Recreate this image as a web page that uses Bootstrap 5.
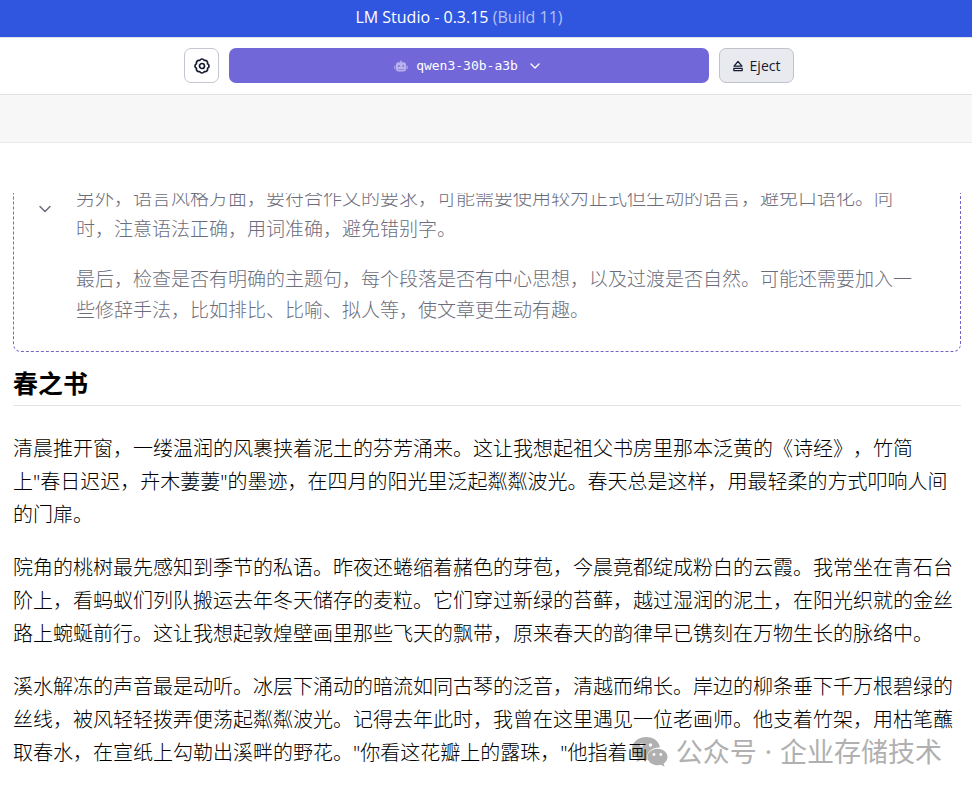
<!DOCTYPE html>
<html lang="zh-CN">
<head>
<meta charset="utf-8">
<meta name="viewport" content="width=device-width, initial-scale=1">
<title>LM Studio</title>
<link href="https://cdn.jsdelivr.net/npm/bootstrap@5.3.0/dist/css/bootstrap.min.css" rel="stylesheet">
<style>
body { font-family: "Noto Sans", "Noto Sans CJK SC", sans-serif; color: #000; background: #fff; text-spacing-trim: space-all; }
.title-bar { background: #3056e0; color: #fff; font-family: "Open Sans", sans-serif; font-size: 16px; line-height: 20px; padding: 7px 54px 10px 0; }
.title-bar span { color: #b3c1f4; font-weight: 500; }
.tool-bar { border-top: 1px solid #dee2ea; border-bottom: 1px solid #e2e2e4; padding: 10px 178px 11px 184px; gap: 10px; }
.tool-bar .btn { height: 35px; border-radius: 7px; padding: 0; }
.btn.gear-btn { width: 35px; background: #fff; border: 1px solid #c4c5d0; color: #141b2e; }
.btn.model-btn { background: #7267d8; color: #fff; border: 0; font-family: "DejaVu Sans Mono", monospace; font-size: 13px; }
.btn.eject-btn { width: 75px; background: #e9eaef; border: 1px solid #c1c3cc; color: #141b2e; font-family: "Open Sans", sans-serif; font-size: 14px; gap: 7px; }
.sub-bar { height: 48px; background: #f7f7f7; border-bottom: 1px solid #e9e9e9; }
.chat-pane { margin-top: 50px; padding: 0 11px 21px 13px; min-height: 0; }
.thought-box { border: 1px dashed #7267c8; border-radius: 8px; padding: 24px 39px 25px 24px; color: #6b6d7c; font-weight: 300; font-size: 19px; line-height: 31px; gap: 24px; }
.thought-box p { margin-bottom: 19px; }
.thought-box .fold-btn { color: #6b6d7c; width: 14px; padding-top: 19px; }
.chat-pane h1 { font-size: 25px; line-height: 36px; font-weight: 700; padding: 13px 0 4px; border-bottom: 1px solid #e3e3e5; margin-bottom: 26px; }
.story-text p { font-size: 20px; line-height: 33px; font-weight: 300; margin-bottom: 20px; }
.watermark { right: 30px; bottom: 18px; z-index: -1; color: #b0b0b0; font-size: 27px; line-height: 40px; gap: 8px; }
svg { display: block; flex: none; }
</style>
<script src="https://cdn.jsdelivr.net/npm/bootstrap@5.3.0/dist/js/bootstrap.bundle.min.js"></script>
</head>
<body>
<div class="d-flex flex-column vh-100 overflow-hidden position-relative">
  <header class="title-bar text-center">LM Studio - 0.3.15 <span>(Build 11)</span></header>
  <nav class="tool-bar d-flex">
    <button type="button" class="btn gear-btn d-flex align-items-center justify-content-center" aria-label="Settings">
      <svg width="18" height="18" viewBox="0 0 18 18" fill="none" stroke="currentColor" stroke-width="1.700" stroke-linejoin="round"><path d="M6.700 3.500A2.500 2.500 0 0 1 11.300 3.500A2.500 2.500 0 0 1 14.500 6.700A2.500 2.500 0 0 1 14.500 11.300A2.500 2.500 0 0 1 11.300 14.500A2.500 2.500 0 0 1 6.700 14.500A2.500 2.500 0 0 1 3.500 11.300A2.500 2.500 0 0 1 3.500 6.700A2.500 2.500 0 0 1 6.700 3.500z"/><circle cx="9" cy="9" r="2.500"/></svg>
    </button>
    <button type="button" class="btn model-btn flex-grow-1 d-flex align-items-center justify-content-center">
      <svg class="me-2" width="14" height="12" viewBox="0 0 14 12" fill="#b9b2ec"><path d="M6.300.5h1.400v1.800h1.800a2.500 2.500 0 0 1 2.500 2.500v4.400a2.300 2.300 0 0 1-2.300 2.300H4.300A2.300 2.300 0 0 1 2 9.200V4.800a2.500 2.500 0 0 1 2.500-2.500h1.800zM1.400 5.200v4.200A1.400 1.400 0 0 1 .3 8V6.500a1.400 1.400 0 0 1 1.100-1.300zM12.600 5.200a1.400 1.400 0 0 1 1.100 1.300V8a1.400 1.400 0 0 1-1.100 1.400z"/><g fill="#7f75db"><circle cx="4.900" cy="6" r="1"/><circle cx="9.100" cy="6" r="1"/><path d="M4 9h1.400v1H4zM6.300 9h1.400v1H6.300zM8.600 9H10v1H8.600z"/></g></svg>
      <span>qwen3-30b-a3b</span>
      <svg class="ms-2" width="18" height="10" viewBox="0 0 18 10" fill="none" stroke="currentColor" stroke-width="1.300" stroke-linecap="round" stroke-linejoin="round"><path d="m5 3 4 4 4-4"/></svg>
    </button>
    <button type="button" class="btn eject-btn d-flex align-items-center justify-content-center">
      <svg width="10" height="12" viewBox="0 0 10 12" fill="none" stroke="currentColor" stroke-width="1.200" stroke-linejoin="round"><path d="M5 1.500 9 6.200H1zM.8 8.400h8.400v2.200H.8z"/></svg>
      <span>Eject</span>
    </button>
  </nav>
  <div class="sub-bar flex-shrink-0"></div>
  <main class="chat-pane flex-grow-1 d-flex flex-column justify-content-end overflow-hidden">
    <section class="thought-box d-flex align-items-start">
      <button type="button" class="fold-btn btn border-0 px-0" aria-label="Collapse">
        <svg width="14" height="14" viewBox="0 0 14 14" fill="none" stroke="currentColor" stroke-width="1.500" stroke-linecap="round" stroke-linejoin="round"><path d="m2 4.500 5 5 5-5"/></svg>
      </button>
      <div>
        <p>另外，语言风格方面，要符合作文的要求，可能需要使用较为正式但生动的语言，避免口语化。同时，注意语法正确，用词准确，避免错别字。</p>
        <p class="mb-0">最后，检查是否有明确的主题句，每个段落是否有中心思想，以及过渡是否自然。可能还需要加入一些修辞手法，比如排比、比喻、拟人等，使文章更生动有趣。</p>
      </div>
    </section>
    <article class="story-text">
      <h1>春之书</h1>
      <p>清晨推开窗，一缕温润的风裹挟着泥土的芬芳涌来。这让我想起祖父书房里那本泛黄的《诗经》，竹简<wbr><span class="text-nowrap">上"春日</span>迟迟，卉木萋萋"的墨迹，在四月的阳光里泛起粼粼波光。春天总是这样，用最轻柔的方式叩响人间的门扉。</p>
      <p>院角的桃树最先感知到季节的私语。昨夜还蜷缩着赭色的芽苞，今晨竟都绽成粉白的云霞。我常坐在青石台阶上，看蚂蚁们列队搬运去年冬天储存的麦粒。它们穿过新绿的苔藓，越过湿润的泥土，在阳光织就的金丝路上蜿蜒前行。这让我想起敦煌壁画里那些飞天的飘带，原来春天的韵律早已镌刻在万物生长的脉络中。</p>
      <p class="mb-0">溪水解冻的声音最是动听。冰层下涌动的暗流如同古琴的泛音，清越而绵长。岸边的柳条垂下千万根碧绿的丝线，被风轻轻拨弄便荡起粼粼波光。记得去年此时，我曾在这里遇见一位老画师。他支着竹架，用枯笔蘸取春水，在宣纸上勾勒出溪畔的野花。"你看这花瓣上的露珠，"他指着画</p>
    </article>
  </main>
  <div class="watermark position-absolute d-flex align-items-center">
    <svg width="36" height="30" viewBox="0 0 36 30"><path fill="#b0b0b0" d="M14 0c7.700 0 13.500 4.800 13.900 10.600-8.400-.6-14.500 5.500-12.300 12.300-1.800.3-4 .1-6-.5L4.500 25l1.300-4.300C2.200 18.500 0 15.400 0 11.800 0 5.200 6.300 0 14 0z"/><path fill="#b0b0b0" d="M25.500 11.800c5.800 0 10 3.700 10 8.200 0 2.800-1.500 4.900-3.900 6.500l1 3.200-3.700-2c-1 .3-2.200.5-3.400.5-5.800 0-10-3.700-10-8.200s4.200-8.200 10-8.200z"/><g fill="#fff"><circle cx="9.500" cy="8" r="1.700"/><circle cx="18.500" cy="8" r="1.700"/><circle cx="22" cy="17.500" r="1.400"/><circle cx="28.800" cy="17.500" r="1.400"/></g></svg>
    <span>公众号</span><span>·</span><span>企业存储技术</span>
  </div>
</div>
</body>
</html>
